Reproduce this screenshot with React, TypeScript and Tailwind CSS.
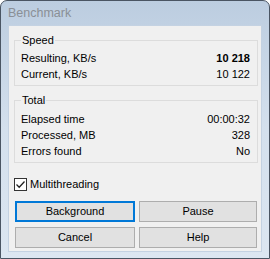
import React from "react";

const font = { fontFamily: '"Liberation Sans", Arial, sans-serif' };

function Row({ label, value, bold }: { label: string; value: string; bold?: boolean }) {
  return (
    <div className="flex h-[16px] items-center justify-between pl-[6px] pr-[7px] text-[11px] leading-[16px] text-black">
      <span>{label}</span>
      <span className={bold ? "font-bold" : ""}>{value}</span>
    </div>
  );
}

function Btn({ label, focused, w }: { label: string; focused?: boolean; w: string }) {
  return (
    <div
      className={
        "flex h-[21px] items-center justify-center bg-[#e1e1e1] text-[11px] text-black " +
        w +
        (focused ? " border-2 border-[#0078d7]" : " border border-[#adadad]")
      }
    >
      {label}
    </div>
  );
}

export default function App() {
  return (
    <div style={font} className="h-[259px] w-[270px] bg-white">
      <div className="flex h-[259px] w-[270px] flex-col rounded-t-[7px] border border-[#4a5563] bg-gradient-to-b from-[#bccde0] via-[#d4e0ed] to-[#dce6f1]">
        <div className="flex h-[24px] items-center pl-[7px] pt-[1px] text-[12.5px] text-[#8a8f96]">
          Benchmark
        </div>
        <div className="mx-[7px] mb-[6px] flex flex-1 flex-col border border-[#c4d2e2] bg-[#f0f0f0]">
          <fieldset className="ml-[5px] mr-[3px] mt-[8px] border border-[#dcdcdc] pb-[3px]">
            <legend className="ml-[6px] px-[1px] text-[11px] leading-[13px] text-black">Speed</legend>
            <div className="pt-[3px]">
              <Row label="Resulting, KB/s" value="10 218" bold />
              <Row label="Current, KB/s" value="10 122" />
            </div>
          </fieldset>
          <fieldset className="ml-[5px] mr-[3px] mt-[8px] border border-[#dcdcdc] pb-[3px]">
            <legend className="ml-[6px] px-[1px] text-[11px] leading-[13px] text-black">Total</legend>
            <div className="pt-[4px]">
              <Row label="Elapsed time" value="00:00:32" />
              <Row label="Processed, MB" value="328" />
              <Row label="Errors found" value="No" />
            </div>
          </fieldset>
          <div className="ml-[5px] mt-[13px] flex items-center gap-[3px]">
            <div className="flex h-[13px] w-[13px] items-center justify-center border border-[#333333] bg-white">
              <svg width="11" height="11" viewBox="0 0 11 11">
                <path d="M1.5 5.5 L4.2 8.2 L9.5 2.5" fill="none" stroke="#222" strokeWidth="1.3" />
              </svg>
            </div>
            <span className="text-[11px] text-black">Multithreading</span>
          </div>
          <div className="ml-[6px] mt-[8px] flex gap-[4px]">
            <Btn label="Background" focused w="w-[120px]" />
            <Btn label="Pause" w="w-[118px]" />
          </div>
          <div className="ml-[6px] mt-[5px] flex gap-[4px]">
            <Btn label="Cancel" w="w-[120px]" />
            <Btn label="Help" w="w-[118px]" />
          </div>
        </div>
      </div>
    </div>
  );
}
